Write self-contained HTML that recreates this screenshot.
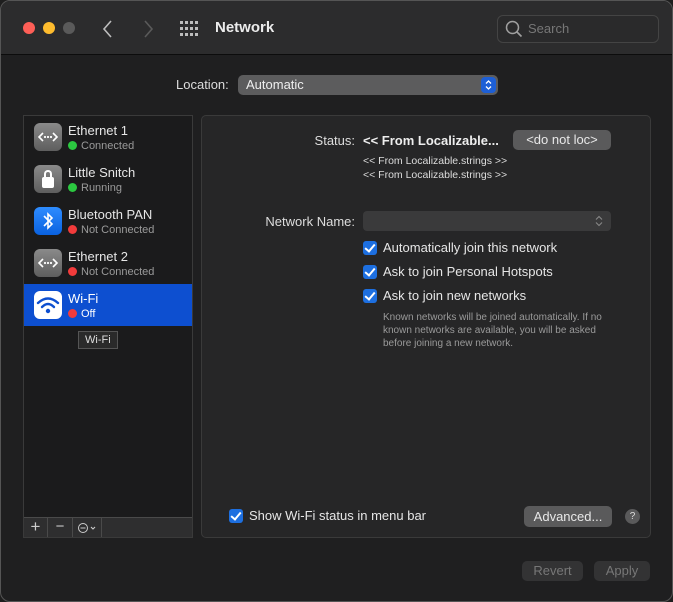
<!DOCTYPE html>
<html><head><style>
*{margin:0;padding:0;box-sizing:border-box}
body{width:673px;height:602px;background:#1e1e1e;font-family:"Liberation Sans",sans-serif;color:#e0e0e0;position:relative;overflow:hidden}
.win{position:absolute;left:0;top:0;width:673px;height:602px;border:1px solid #555;border-radius:10px;background:#1f1f20;overflow:hidden}
.tb{position:absolute;left:0;top:0;width:100%;height:54px;background:#2c2c2d;border-bottom:1px solid #0c0c0c}
.dot{position:absolute;top:21px;width:12px;height:12px;border-radius:50%}
.a{position:absolute;white-space:nowrap}
.side{position:absolute;left:22px;top:114px;width:170px;height:423px;background:#1b1b1c;border:1px solid #3a3a3a}
.row{position:absolute;left:0;width:168px;height:42px}
.ic{position:absolute;left:10px;top:7px;width:28px;height:28px;border-radius:6px;background:linear-gradient(#8a8a8a,#5e5e5e)}
.t1{position:absolute;left:44px;top:7px;font-size:13px;color:#e6e6e6}
.t2{position:absolute;left:44px;top:24px;font-size:11px;color:#9a9a9a}
.sd{display:inline-block;width:9px;height:9px;border-radius:50%;margin-right:4px;vertical-align:-1px}
.panel{position:absolute;left:200px;top:114px;width:450px;height:423px;background:#262627;border:1px solid #3a3a3a;border-radius:5px}
.cb{position:absolute;width:14px;height:14px;border-radius:3px;background:#1d6fe0}
.cb:after{content:"";position:absolute;left:4px;top:1px;width:4px;height:8px;border:solid #fff;border-width:0 2px 2px 0;transform:rotate(40deg)}
.btn{position:absolute;background:#5a5a5b;border-radius:5px;font-size:13px;color:#e8e8e8;text-align:center}
</style></head><body>
<div class="win">
<div class="tb">
<div class="dot" style="left:22px;background:#fe5f57"></div>
<div class="dot" style="left:42px;background:#febc2e"></div>
<div class="dot" style="left:62px;background:#5a5a5a"></div>
<svg class="a" style="left:100px;top:18px" width="14" height="20"><path d="M10 2 L3 10 L10 18" stroke="#bdbdbd" stroke-width="1.6" fill="none"/></svg>
<svg class="a" style="left:140px;top:18px" width="14" height="20"><path d="M4 2 L11 10 L4 18" stroke="#5a5a5a" stroke-width="1.6" fill="none"/></svg>
<svg class="a" style="left:179px;top:20px" width="20" height="16"><g fill="#bdbdbd"><rect x="0" y="0" width="3" height="3"/><rect x="5" y="0" width="3" height="3"/><rect x="10" y="0" width="3" height="3"/><rect x="15" y="0" width="3" height="3"/><rect x="0" y="6" width="3" height="3"/><rect x="5" y="6" width="3" height="3"/><rect x="10" y="6" width="3" height="3"/><rect x="15" y="6" width="3" height="3"/><rect x="0" y="12" width="3" height="3"/><rect x="5" y="12" width="3" height="3"/><rect x="10" y="12" width="3" height="3"/><rect x="15" y="12" width="3" height="3"/></g></svg>
<div class="a" style="left:214px;top:18px;font-size:15px;font-weight:bold;color:#ececec">Network</div>
<div class="a" style="left:496px;top:14px;width:162px;height:28px;border:1px solid #444;border-radius:6px;background:#2a2a2b"></div>
<svg class="a" style="left:504px;top:19px" width="18" height="18"><circle cx="7.5" cy="7.5" r="6" stroke="#a0a0a0" stroke-width="1.5" fill="none"/><path d="M12 12 L16.5 16.5" stroke="#a0a0a0" stroke-width="1.6"/></svg>
<div class="a" style="left:527px;top:20px;font-size:13px;color:#777">Search</div>
</div>
<div class="a" style="left:175px;top:76px;font-size:13px;color:#ddd">Location:</div>
<div class="a" style="left:237px;top:74px;width:260px;height:20px;background:#5c5c5d;border-radius:5px"></div>
<div class="a" style="left:245px;top:76px;font-size:13px;color:#eee">Automatic</div>
<svg class="a" style="left:480px;top:76px" width="15" height="16"><rect width="15" height="16" rx="4" fill="#1d5fd6"/><path d="M5 6.5 L7.5 4 L10 6.5 M5 9.5 L7.5 12 L10 9.5" stroke="#fff" stroke-width="1.3" fill="none"/></svg>

<div class="side">
<div class="row" style="top:0">
<div class="ic"></div><svg class="a" style="left:10px;top:7px" width="28" height="28"><path d="M9 10 L5 14 L9 18 M19 10 L23 14 L19 18" stroke="#fff" stroke-width="1.6" fill="none"/><circle cx="11" cy="14" r="1.1" fill="#fff"/><circle cx="14" cy="14" r="1.1" fill="#fff"/><circle cx="17" cy="14" r="1.1" fill="#fff"/></svg>
<div class="t1">Ethernet 1</div><div class="t2"><span class="sd" style="background:#2bc840"></span>Connected</div></div>
<div class="row" style="top:42px">
<div class="ic"></div><div class="a" style="left:18px;top:19px;width:12px;height:11px;background:#fff;border-radius:2px"></div><div class="a" style="left:20px;top:12px;width:8px;height:9px;border:2px solid #fff;border-bottom:none;border-radius:4px 4px 0 0"></div>
<div class="t1">Little Snitch</div><div class="t2"><span class="sd" style="background:#2bc840"></span>Running</div></div>
<div class="row" style="top:84px">
<div class="ic" style="background:linear-gradient(#2e8cff,#0a62e0)"></div><svg class="a" style="left:17px;top:11px" width="14" height="20"><path d="M3 5 L11 13 L7 17 L7 3 L11 7 L3 15" stroke="#fff" stroke-width="1.6" fill="none"/></svg>
<div class="t1">Bluetooth PAN</div><div class="t2"><span class="sd" style="background:#f23b3b"></span>Not Connected</div></div>
<div class="row" style="top:126px">
<div class="ic"></div><svg class="a" style="left:10px;top:7px" width="28" height="28"><path d="M9 10 L5 14 L9 18 M19 10 L23 14 L19 18" stroke="#fff" stroke-width="1.6" fill="none"/><circle cx="11" cy="14" r="1.1" fill="#fff"/><circle cx="14" cy="14" r="1.1" fill="#fff"/><circle cx="17" cy="14" r="1.1" fill="#fff"/></svg>
<div class="t1">Ethernet 2</div><div class="t2"><span class="sd" style="background:#f23b3b"></span>Not Connected</div></div>
<div class="row" style="top:168px;background:#0d4fd0">
<div class="ic" style="background:#fff"></div><svg class="a" style="left:12px;top:12px" width="24" height="20"><g stroke="#0d4fd0" stroke-width="2.4" fill="none" stroke-linecap="round"><path d="M2 7 Q12 -2 22 7"/><path d="M6 11 Q12 5 18 11"/></g><circle cx="12" cy="15" r="2.2" fill="#0d4fd0"/></svg>
<div class="t1" style="color:#fff">Wi-Fi</div><div class="t2" style="color:#fff"><span class="sd" style="background:#f23b3b"></span>Off</div></div>
<div class="a" style="left:54px;top:215px;height:18px;padding:0 6px;border:1px solid #555;background:#2a2a2a;font-size:11px;line-height:16px;color:#ddd">Wi-Fi</div>
<div class="a" style="left:0;top:401px;width:168px;height:20px;background:#2e2e2f;border-top:1px solid #4a4a4a"></div>
<div class="a" style="left:0;top:402px;width:24px;height:19px;border-right:1px solid #4a4a4a;font-size:17px;text-align:center;line-height:17px;color:#ccc">+</div>
<div class="a" style="left:24px;top:402px;width:25px;height:19px;border-right:1px solid #4a4a4a;font-size:15px;text-align:center;line-height:17px;color:#ccc">&minus;</div>
<div class="a" style="left:49px;top:402px;width:29px;height:19px;border-right:1px solid #4a4a4a"></div>
<svg class="a" style="left:53px;top:405px" width="22" height="14"><circle cx="6" cy="7" r="4.5" stroke="#ccc" stroke-width="1" fill="none"/><path d="M3.5 7 H8.5 M14 6 L16 8 L18 6" stroke="#ccc" stroke-width="1.1" fill="none"/></svg>
</div>

<div class="panel">
<div class="a" style="right:295px;top:17px;font-size:13px;color:#ddd">Status:</div>
<div class="a" style="left:161px;top:17px;font-size:13px;font-weight:bold;color:#eee">&lt;&lt; From Localizable...</div>
<div class="btn" style="left:311px;top:14px;width:98px;height:20px;line-height:20px">&lt;do not loc&gt;</div>
<div class="a" style="left:161px;top:39px;font-size:10.5px;color:#ddd">&lt;&lt; From Localizable.strings &gt;&gt;</div>
<div class="a" style="left:161px;top:53px;font-size:10.5px;color:#ddd">&lt;&lt; From Localizable.strings &gt;&gt;</div>
<div class="a" style="right:295px;top:98px;font-size:13px;color:#ddd">Network Name:</div>
<div class="a" style="left:161px;top:95px;width:248px;height:20px;background:#3a3a3b;border-radius:4px"></div>
<svg class="a" style="left:392px;top:98px" width="10" height="14"><path d="M2 5.5 L5 2.5 L8 5.5 M2 8.5 L5 11.5 L8 8.5" stroke="#888" stroke-width="1.1" fill="none"/></svg>
<div class="cb" style="left:161px;top:125px"></div><div class="a" style="left:181px;top:124px;font-size:13px;color:#e6e6e6">Automatically join this network</div>
<div class="cb" style="left:161px;top:149px"></div><div class="a" style="left:181px;top:148px;font-size:13px;color:#e6e6e6">Ask to join Personal Hotspots</div>
<div class="cb" style="left:161px;top:173px"></div><div class="a" style="left:181px;top:172px;font-size:13px;color:#e6e6e6">Ask to join new networks</div>
<div class="a" style="left:181px;top:195px;font-size:10px;line-height:13px;color:#9a9a9a;white-space:normal;width:240px">Known networks will be joined automatically. If no known networks are available, you will be asked before joining a new network.</div>
<div class="cb" style="left:27px;top:393px"></div><div class="a" style="left:47px;top:392px;font-size:13px;color:#e6e6e6">Show Wi-Fi status in menu bar</div>
<div class="btn" style="left:322px;top:390px;width:88px;height:21px;line-height:21px">Advanced...</div>
<div class="a" style="left:423px;top:393px;width:15px;height:15px;border-radius:50%;background:#5a5a5b;font-size:10px;text-align:center;line-height:15px;color:#ddd">?</div>
</div>
<div class="btn" style="left:521px;top:560px;width:61px;height:20px;line-height:20px;background:#333334;color:#777">Revert</div>
<div class="btn" style="left:593px;top:560px;width:56px;height:20px;line-height:20px;background:#333334;color:#777">Apply</div>
</div>
</body></html>
